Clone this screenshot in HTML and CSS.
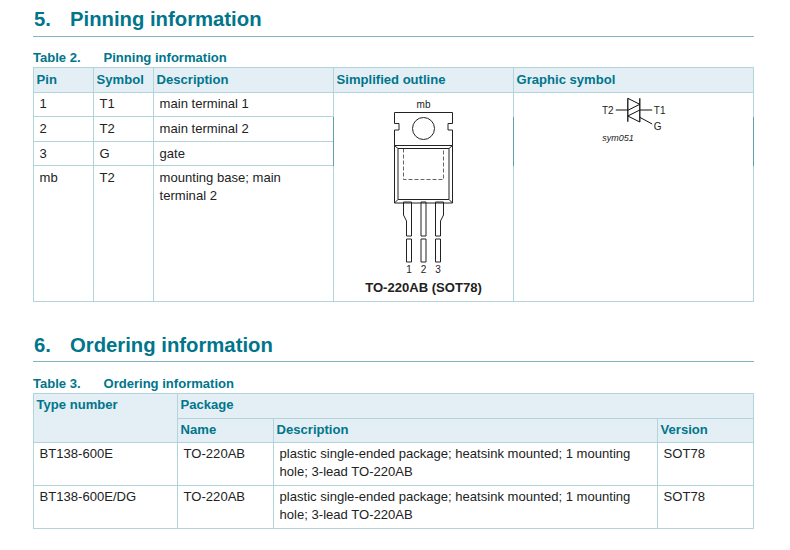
FILE: index.html
```html
<!DOCTYPE html>
<html lang="en">
<head>
<meta charset="utf-8">
<title>Pinning and ordering information</title>
<link rel="stylesheet" href="styles.css">
</head>
<body>
<main class="page">
  <section class="sec sec-pin">
    <h2 class="heading"><span class="num">5.</span>Pinning information</h2>
    <div class="caption"><span class="tnum">Table 2.</span>Pinning information</div>
    <table class="tbl pin">
      <colgroup><col class="c60"><col class="c60"><col class="c180"><col class="c180"><col class="c240"></colgroup>
      <thead>
        <tr class="hrow"><th>Pin</th><th>Symbol</th><th>Description</th><th>Simplified outline</th><th>Graphic symbol</th></tr>
      </thead>
      <tbody>
        <tr class="r24 first">
          <td>1</td><td>T1</td><td>main terminal 1</td>
          <td rowspan="4" class="fig tick">
            <svg class="outline" width="100" height="180" viewBox="1 0 100 180">
              <text x="50.500" y="12" class="lbl" text-anchor="middle">mb</text>
              <g fill="none" stroke="#222" stroke-width="1">
                <path d="M21.500 16.500H79.500V27.500H75V34H79.500V49.500H21.500V34H26V27.500H21.500Z"/>
                <circle cx="50.500" cy="32.500" r="11"/>
                <path d="M21.500 49.500V107H79.500V49.500"/>
                <path d="M25 52.500H76V103.500H25Z"/>
                <path d="M21.500 49.500L25 52.500M79.500 49.500L76 52.500M21.500 107L25 103.500M79.500 107L76 103.500"/>
                <path d="M30.500 52.500V83.500H70.500V52.500" stroke-dasharray="4 2" stroke-width=".7"/>
                <path d="M30.500 106H38.500V140H33.500V125L30.500 119Z"/>
                <path d="M48 106H53V140H48Z"/>
                <path d="M62.500 106H70.500V119L67.500 125V140H62.500Z"/>
                <path d="M33.500 143H38.500V166H33.500Z"/>
                <path d="M48 143H53V166H48Z"/>
                <path d="M62.500 143H67.500V166H62.500Z"/>
              </g>
              <text x="36" y="177" class="lbl" text-anchor="middle">1</text>
              <text x="50.500" y="177" class="lbl" text-anchor="middle">2</text>
              <text x="65" y="177" class="lbl" text-anchor="middle">3</text>
            </svg>
            <div class="figcap">TO-220AB (SOT78)</div>
          </td>
          <td rowspan="4" class="fig tick tick-r">
            <svg class="symbol" width="64" height="50" viewBox="0 0 64 50">
              <text x="0" y="17.600" class="lbl">T2</text>
              <text x="51.800" y="17.600" class="lbl">T1</text>
              <text x="51.800" y="34.300" class="lbl">G</text>
              <g fill="none" stroke="#111" stroke-width="1">
                <path d="M13.800 14H25.800M37.800 14H50.200"/>
                <path d="M25.800 2.300V25.700M37.800 2.300V26" stroke-width="1.300"/>
                <path d="M25.800 2.300L37.800 8.300L25.800 14.300M37.800 14L25.800 20L37.800 26"/>
                <path d="M37.800 21.300L50.200 28"/>
              </g>
              <text x="0.200" y="45" class="ref">sym051</text>
            </svg>
          </td>
        </tr>
        <tr class="r25"><td>2</td><td>T2</td><td class="dark-r">main terminal 2</td></tr>
        <tr class="r24"><td>3</td><td>G</td><td class="dark-r">gate</td></tr>
        <tr class="r136"><td>mb</td><td>T2</td><td>mounting base; main terminal 2</td></tr>
      </tbody>
    </table>
  </section>
  <section class="sec sec-ord">
    <h2 class="heading"><span class="num">6.</span>Ordering information</h2>
    <div class="caption"><span class="tnum">Table 3.</span>Ordering information</div>
    <table class="tbl ord">
      <colgroup><col class="c144"><col class="c96"><col class="c384"><col class="c96"></colgroup>
      <thead>
        <tr class="hrow"><th rowspan="2">Type number</th><th colspan="3">Package</th></tr>
        <tr class="r24"><th>Name</th><th>Description</th><th>Version</th></tr>
      </thead>
      <tbody>
        <tr class="r43"><td>BT138-600E</td><td>TO-220AB</td><td>plastic single-ended package; heatsink mounted; 1 mounting hole; 3-lead TO-220AB</td><td>SOT78</td></tr>
        <tr class="r43"><td>BT138-600E/DG</td><td>TO-220AB</td><td>plastic single-ended package; heatsink mounted; 1 mounting hole; 3-lead TO-220AB</td><td>SOT78</td></tr>
      </tbody>
    </table>
  </section>
</main>
</body>
</html>
```
FILE: styles.css
```css
* { box-sizing: border-box; }
html, body { margin: 0; padding: 0; background: #fff; }
body { font-family: "Liberation Sans", Arial, sans-serif; color: #222; overflow: hidden; }
.page { width: 790px; height: 550px; padding: 0 36px 0 33px; }
.sec-pin { padding-top: 6px; }
.sec-ord { padding-top: 30px; }
.heading {
  margin: 0;
  height: 30px;
  line-height: 26px;
  font-size: 20.300px;
  font-weight: 700;
  color: #00758c;
  border-bottom: 1px solid #7fb6c6;
  display: flex;
}
.sec-pin .heading { height: 31px; }
.num { width: 37px; padding-left: 1px; }
.caption {
  display: flex;
  margin-top: 13px;
  height: 18px;
  line-height: 17px;
  font-size: 13.050px;
  font-weight: 700;
  color: #00758c;
}
.sec-pin .caption { margin-top: 12px; }
.tnum { width: 70.500px; }
.tbl {
  width: 721px;
  table-layout: fixed;
  border-collapse: collapse;
  font-size: 13.07px;
  line-height: 18px;
}
.tbl th, .tbl td { border: 1px solid #b4d4dc; vertical-align: top; text-align: left; }
.tbl th {
  background: #e3eff4;
  color: #00758c;
  font-weight: 700;
  padding: 3px 3px 0 2.600px;
}
.tbl td { padding: 3px 6px 0 5.600px; }
.tbl.ord th { padding-top: 2px; }
.tbl.ord td { padding-top: 2px; }
.tbl .first td { padding-top: 2px; }
.hrow { height: 25px; }
.r24 { height: 24px; }
.r25 { height: 25px; }
.r43 { height: 43px; }
.r136 { height: 136px; }
.c60 { width: 60px; }
.c180 { width: 180px; }
.c240 { width: 240px; }
.c144 { width: 144px; }
.c96 { width: 96px; }
.c384 { width: 384px; }
.tbl .dark-r { border-right-color: #5f9fb0; }
.tbl .fig, .tbl .first .fig { padding: 3px 0 0; text-align: center; position: relative; }
.tick::before {
  content: "";
  position: absolute;
  left: -1px;
  top: 24px;
  width: 1px;
  height: 49px;
  background: #5f9fb0;
}
.tick-r::after {
  content: "";
  position: absolute;
  right: -1px;
  top: 24px;
  width: 1px;
  height: 49px;
  background: #5f9fb0;
}
.outline, .symbol { display: block; margin: 0 auto; }
.lbl { font-size: 10px; fill: #222; }
.ref { font-size: 9px; font-style: italic; fill: #222; }
.figcap { font-weight: 700; line-height: 16px; color: #222; margin-top: 4px; }
```
